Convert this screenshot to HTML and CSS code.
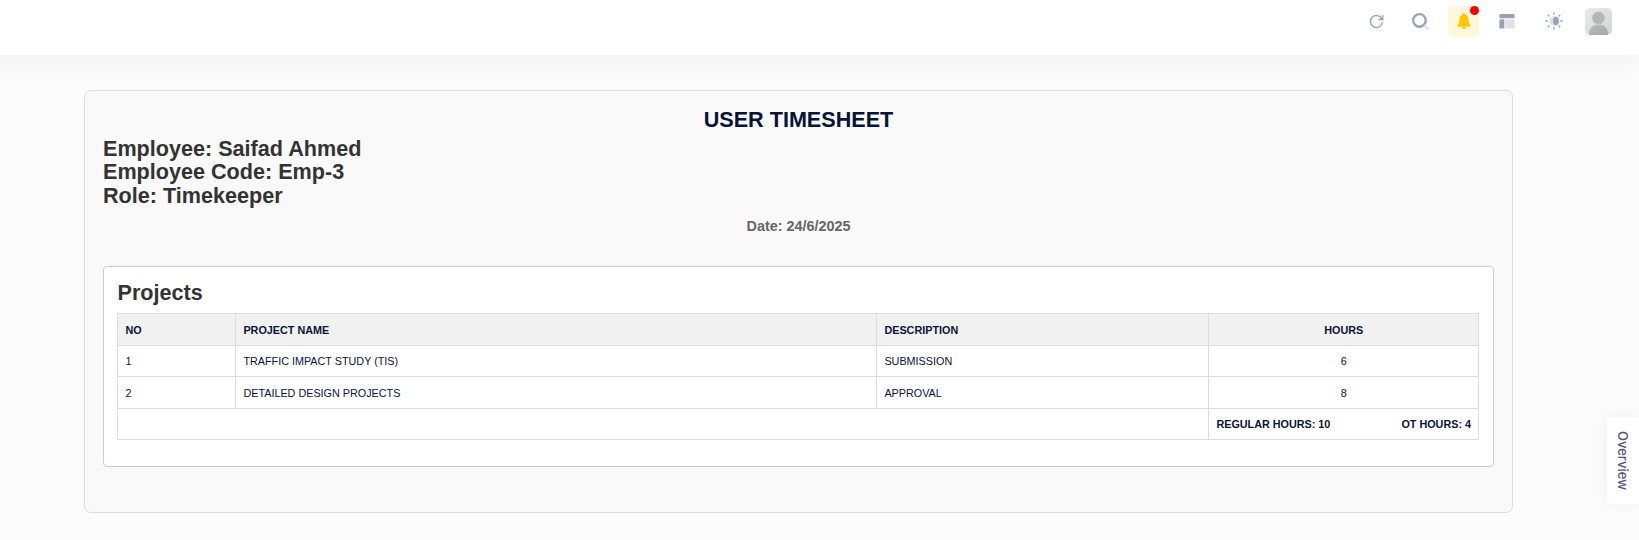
FILE: index.html
```html
<!DOCTYPE html>
<html lang="en">
<head>
<meta charset="utf-8">
<title>User Timesheet</title>
<link rel="stylesheet" href="styles.css">
</head>
<body>
<header class="topbar">
  <svg class="icon refresh" viewBox="0 0 16 16"><path d="M13.800 5.300A6.400 6.400 0 1 0 14.300 9M14.700 1.200v4.700H10" fill="none" stroke="#99a1b7" stroke-width="1.500"/></svg>
  <svg class="icon search" viewBox="0 0 16 16"><circle cx="7" cy="7" r="5.900" fill="none" stroke="#99a1b7" stroke-width="2.200"/><path d="M12.200 12.200l2.400 2.400" stroke="#dfe2ea" stroke-width="2.400" stroke-linecap="round"/></svg>
  <div class="bell">
    <svg class="bell-icon" viewBox="0 0 14 16"><path d="M7 0C6 0 5.700 .7 5.700 1.400 3.700 2 2.600 3.700 2.600 5.800 2.600 9.500 1.700 10.600 .7 12Q0 13.600 1.300 13.700H12.700Q14 13.600 13.300 12C12.300 10.600 11.400 9.500 11.400 5.800 11.400 3.700 10.300 2 8.300 1.400 8.300 .7 8 0 7 0ZM5 14H9Q8.600 16 7 16T5 14Z" fill="#ffc700"/></svg>
    <span class="dot"></span>
  </div>
  <svg class="icon layout" viewBox="0 0 16 16"><rect x=".4" y="1" width="15.200" height="4.200" rx="1.200" fill="#99a1b7"/><rect x=".4" y="6.200" width="5" height="9.200" rx="1.200" fill="#99a1b7"/><rect x="6.400" y="6.200" width="9.200" height="9.200" rx="1.200" fill="#dfe2ea"/></svg>
  <svg class="icon sun" viewBox="0 0 18 18"><circle cx="9" cy="9" r="4.700" fill="#dfe2ea"/><ellipse cx="11" cy="9" rx="2.900" ry="4.200" fill="#99a1b7"/><path d="M9 .9v1.300M9 15.800v1.300M.9 9h1.300M15.800 9h1.300M3.200 3.200l.8.800M14 14l.8.800M3.200 14.800l.8-.8M14 4l.8-.8" stroke="#99a1b7" stroke-width="1.400" stroke-linecap="round"/></svg>
  <svg class="avatar" viewBox="0 0 27 27">
    <defs><linearGradient id="back" x1="0" y1="0" x2="1" y2="1"><stop offset="0" stop-color="#ebebec"/><stop offset="1" stop-color="#d2d3d4"/></linearGradient><linearGradient id="person" x1="0" y1="0" x2="1" y2="1"><stop offset="0" stop-color="#bcbdbe"/><stop offset="1" stop-color="#a3a4a6"/></linearGradient></defs>
    <rect width="27" height="27" fill="url(#back)"/><circle cx="13.500" cy="10" r="6.200" fill="#b5b6b8"/><path d="M4 27C4 20 7.500 16.500 13.500 16.500S23 20 23 27Z" fill="url(#person)"/><circle cx="13.500" cy="10" r="6.200" fill="none" stroke="#c6c7c8" stroke-width=".5"/>
  </svg>
</header>
<main class="sheet">
  <h1 class="title">USER TIMESHEET</h1>
  <div class="employee">
    <div>Employee: Saifad Ahmed</div>
    <div>Employee Code: Emp-3</div>
    <div>Role: Timekeeper</div>
  </div>
  <div class="date">Date: 24/6/2025</div>
  <section class="projects">
    <h2 class="subtitle">Projects</h2>
    <table class="table">
      <colgroup><col class="c-no"><col class="c-name"><col class="c-desc"><col class="c-hours"></colgroup>
      <thead><tr><th>NO</th><th>PROJECT NAME</th><th>DESCRIPTION</th><th class="center">HOURS</th></tr></thead>
      <tbody>
        <tr class="short"><td>1</td><td>TRAFFIC IMPACT STUDY (TIS)</td><td>SUBMISSION</td><td class="center">6</td></tr>
        <tr><td>2</td><td>DETAILED DESIGN PROJECTS</td><td>APPROVAL</td><td class="center">8</td></tr>
        <tr class="short"><td colspan="3"></td><td><div class="totals"><span>REGULAR HOURS: 10</span><span>OT HOURS: 4</span></div></td></tr>
      </tbody>
    </table>
  </section>
</main>
<aside class="overview">Overview</aside>
</body>
</html>
```
FILE: styles.css
```css
* { box-sizing: border-box; }
body {
  margin: 0;
  height: 540px;
  overflow: hidden;
  background: #fcfcfc;
  font-family: "Liberation Sans", Arial, sans-serif;
  color: #071437;
}
.topbar {
  height: 55px;
  margin-left: -40px;
  background: #fff;
  box-shadow: 0 10px 27px rgba(0, 0, 0, 0.04);
  display: flex;
  align-items: flex-start;
  justify-content: flex-end;
  padding: 6px 27px 0 0;
}
.icon { display: block; flex: none; }
.refresh { width: 15px; height: 15px; margin: 8px 28px 0 0; }
.search { width: 17px; height: 17px; margin: 7px 19px 0 0; }
.bell {
  position: relative;
  width: 31px;
  height: 31px;
  border-radius: 5px;
  background: #fff8dd;
  display: flex;
  justify-content: center;
  padding-top: 7px;
  margin-right: 20px;
}
.bell-icon { width: 14px; height: 16px; }
.dot {
  position: absolute;
  top: 0;
  right: 0;
  width: 9px;
  height: 9px;
  border-radius: 50%;
  background: #f00;
}
.layout { width: 16px; height: 16px; margin: 7px 30px 0 0; }
.sun { width: 18px; height: 18px; margin: 6px 22px 0 0; }
.avatar { width: 27px; height: 27px; border-radius: 5px; margin-top: 2px; }
.sheet {
  width: 1429px;
  height: 423px;
  margin: 35px 0 0 84px;
  padding: 17px 18px;
  border: 1px solid #ddd;
  border-radius: 7px;
  background: #f9f9f9;
}
.title, .subtitle, .employee {
  margin: 0;
  font-size: 21.6px;
  line-height: 23.76px;
  font-weight: bold;
}
.title { text-align: center; }
.employee { margin-top: 4.9px; color: #333; }
.date {
  margin-top: 8.1px;
  text-align: center;
  font-size: 14.4px;
  line-height: 21.6px;
  font-weight: bold;
  color: #666;
}
.projects {
  margin-top: 28.36px;
  height: 201px;
  padding: 14px 13px;
  border: 1px solid #ccc;
  border-radius: 4px;
  background: #fff;
}
.subtitle { color: #333; margin-bottom: 8.4px; padding-left: 0.5px; }
.table {
  width: 1362px;
  table-layout: fixed;
  border-collapse: collapse;
  font-size: 10.8px;
  line-height: 16px;
}
.c-no { width: 118px; }
.c-name { width: 641px; }
.c-desc { width: 332px; }
.c-hours { width: 270px; }
.table th, .table td {
  height: 32px;
  padding: 0 7px 0 7.4px;
  border: 1px solid #ddd;
  text-align: left;
}
.table .short td { height: 31px; }
.table th { background: #f1f1f1; }
.table .center { text-align: center; }
.totals { display: flex; justify-content: space-between; font-weight: bold; }
.overview {
  position: absolute;
  right: 0;
  top: 417px;
  width: 32px;
  height: 87px;
  display: flex;
  align-items: center;
  justify-content: center;
  writing-mode: vertical-rl;
  border-radius: 5px 0 0 5px;
  background: #fff;
  box-shadow: 0 0 20px rgba(0, 0, 0, 0.06);
  font: 500 13px Inter, sans-serif;
  color: #4b5675;
}
```
